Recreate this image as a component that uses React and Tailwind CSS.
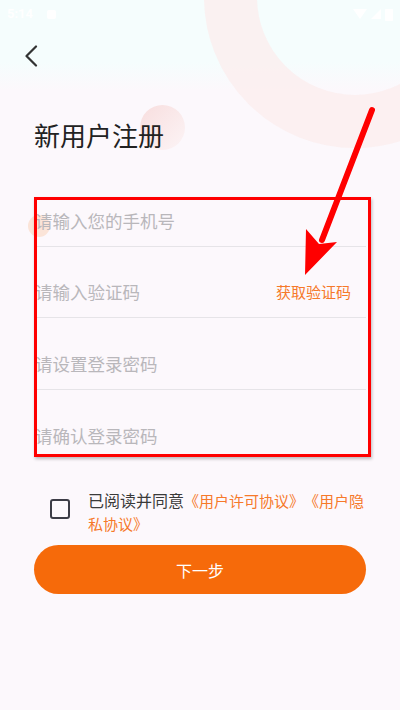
// App.jsx - 新用户注册 screen
import React, { useState } from 'react';

const fields = [
  { placeholder: '请输入您的手机号' },
  { placeholder: '请输入验证码', action: '获取验证码' },
  { placeholder: '请设置登录密码' },
  { placeholder: '请确认登录密码', last: true },
];

const App = () => {
  const [agreed, setAgreed] = useState(false);

  return (
    <div
      className="relative w-[400px] h-[710px] overflow-hidden bg-[linear-gradient(to_bottom,#f5fdfd_0px,#f5fdfd_62px,#fcf8fc_90px,#fcf8fc_100%)]"
      style={{ fontFamily: '"Noto Sans CJK SC", "Noto Sans", sans-serif' }}
    >
      {/* background decorations */}
      <div className="absolute left-[204px] top-[-154px] w-[302px] h-[302px] rounded-full border-[53px] border-[#fbeeee]/80" />
      <div className="absolute left-[140px] top-[105px] w-[45px] h-[45px] rounded-full bg-[linear-gradient(135deg,#f8dede,#fcf4f6)]" />
      <div className="absolute left-[28px] top-[215px] w-[22px] h-[22px] rounded-full bg-[#fbe4d8]" />

      {/* status bar */}
      <div className="relative h-[28px] flex items-center justify-between px-[7px] text-white">
        <div className="flex items-center gap-[14px]">
          <span className="text-[13px] font-bold" style={{ fontFamily: 'Roboto, sans-serif' }}>5:14</span>
          <span className="w-[9px] h-[9px] rounded-[2px] bg-white" />
        </div>
        <div className="flex items-center gap-[4px]">
          <svg width="14" height="10" viewBox="0 0 14 10"><path d="M0 0h14L7 10z" fill="#fff" /></svg>
          <svg width="10" height="10" viewBox="0 0 10 10"><path d="M10 0v10H0z" fill="#fff" /></svg>
          <svg width="8" height="13" viewBox="0 0 8 13"><rect x="0" y="1" width="8" height="12" rx="1" fill="#fff" /></svg>
        </div>
      </div>

      {/* header */}
      <div className="relative h-[56px] flex items-center pl-[24px]">
        <svg width="16" height="22" viewBox="0 0 16 22" fill="none">
          <path d="M12 1.5 2.5 11 12 20.5" stroke="#333" strokeWidth="2.2" strokeLinecap="round" strokeLinejoin="round" />
        </svg>
      </div>

      {/* title */}
      <h1 className="relative mt-[33px] px-[34px] text-[26px] leading-[36px] text-[#222]">新用户注册</h1>

      {/* form */}
      <div className="relative mt-[22px] mx-[34px]">
        {fields.map((f) => (
          <div
            key={f.placeholder}
            className={`h-[71.5px] flex items-end justify-between pb-[16px] pl-[1px] pr-[15px] ${f.last ? '' : 'border-b border-[#e6e4e8]'}`}
          >
            <span className="text-[17.5px] leading-[18px] text-[#b9b7bb]">{f.placeholder}</span>
            {f.action && <span className="text-[15px] leading-[18px] text-[#f6792a]">{f.action}</span>}
          </div>
        ))}
      </div>

      {/* agreement */}
      <div className="relative mt-[28px] flex items-center pl-[50px]">
        <button
          onClick={() => setAgreed(!agreed)}
          className={`shrink-0 w-[20px] h-[20px] mb-[6px] rounded-[3px] border-[2.5px] border-[#3c3c46] ${agreed ? 'bg-[#3c3c46]' : ''}`}
        />
        <p className="ml-[18px] w-[280px] leading-[22px] [text-spacing-trim:space-all]">
          <span className="text-[16px] text-[#3a3a3a]">已阅读并同意</span>
          <span className="text-[15px] text-[#f6792a]">《用户许可协议》《用户隐私协议》</span>
        </p>
      </div>

      {/* next button */}
      <button className="relative mt-[10px] mx-[34px] w-[332px] h-[49px] rounded-full bg-[#f66a0a] text-white text-[16px]">
        下一步
      </button>

      {/* annotation overlay */}
      <div className="absolute left-[34px] top-[197px] w-[337px] h-[260px] border-[3px] border-[#ff0000] shadow-[1px_2px_3px_rgba(0,0,0,0.25)]" />
      <svg className="absolute left-0 top-0" width="400" height="710" viewBox="0 0 400 710">
        <line x1="372" y1="110" x2="322" y2="240" stroke="#ff0000" strokeWidth="6" strokeLinecap="round" />
        <path d="M305 275 L306 229 L319 244 L337 242 Z" fill="#ff0000" />
      </svg>
    </div>
  );
};

export default App;
